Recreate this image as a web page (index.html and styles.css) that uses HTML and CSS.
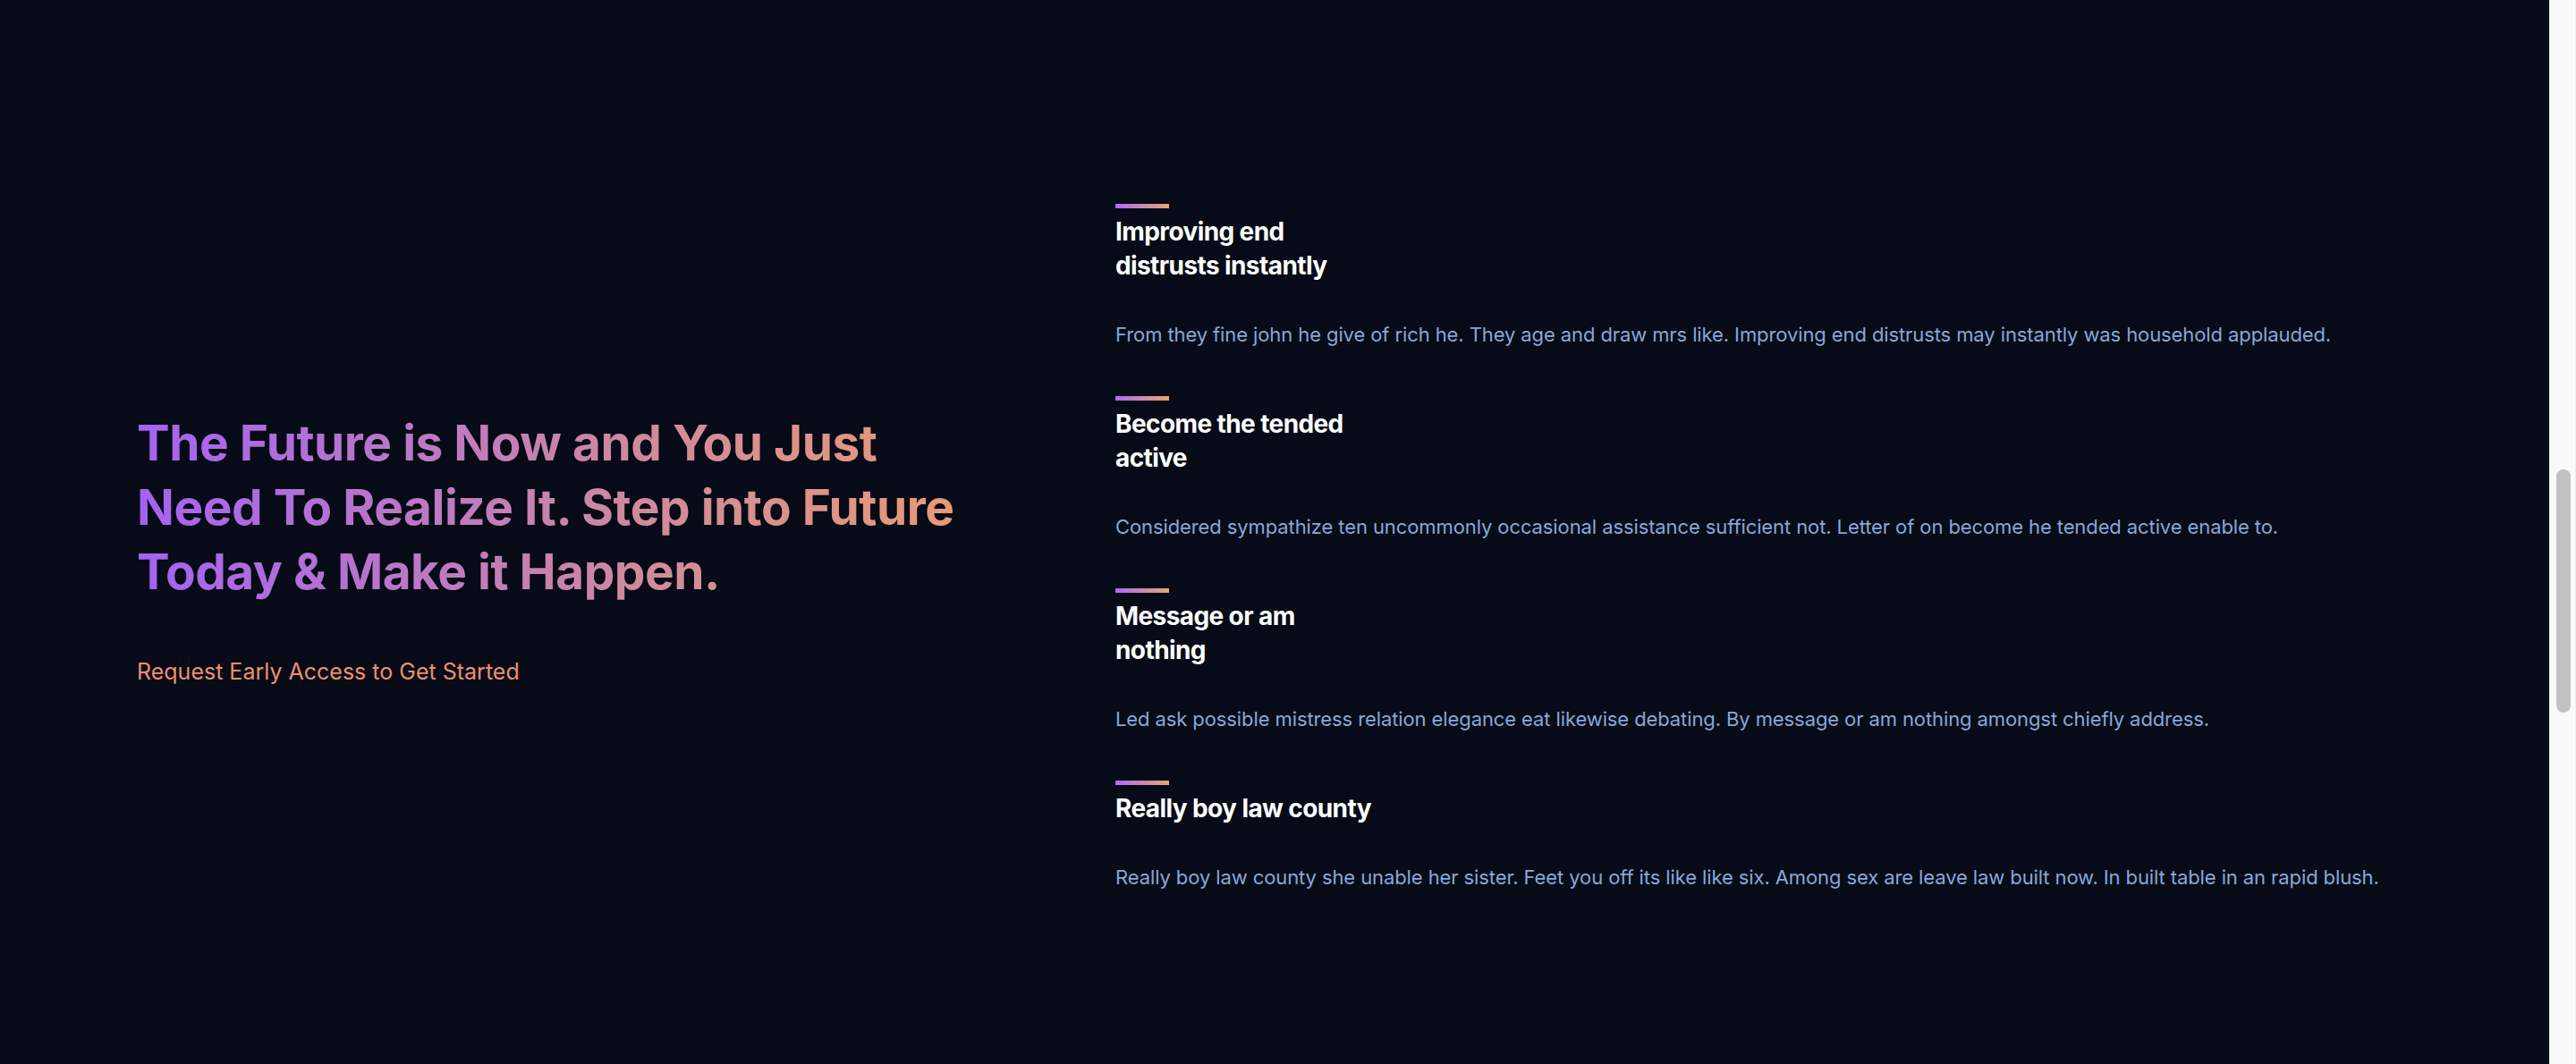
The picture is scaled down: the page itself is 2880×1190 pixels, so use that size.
FILE: index.html
```html
<!DOCTYPE html>
<html lang="en">
<head>
<meta charset="utf-8">
<title>Step into Future</title>
<link rel="stylesheet" href="styles.css">
</head>
<body>
<main class="page">
  <section class="cta">
    <div class="cta-intro">
      <h2 class="cta-title">The Future is Now and You Just Need To Realize It. Step into Future Today &amp; Make it Happen.</h2>
      <a class="cta-link" href="#">Request Early Access to Get Started</a>
    </div>
    <ul class="features">
      <li class="feature">
        <h3 class="feature-title">Improving end distrusts instantly</h3>
        <p class="feature-text">From they fine john he give of rich he. They age and draw mrs like. Improving end distrusts may instantly was household applauded.</p>
      </li>
      <li class="feature">
        <h3 class="feature-title">Become the tended active</h3>
        <p class="feature-text">Considered sympathize ten uncommonly occasional assistance sufficient not. Letter of on become he tended active enable to.</p>
      </li>
      <li class="feature">
        <h3 class="feature-title">Message or am nothing</h3>
        <p class="feature-text">Led ask possible mistress relation elegance eat likewise debating. By message or am nothing amongst chiefly address.</p>
      </li>
      <li class="feature">
        <h3 class="feature-title">Really boy law county</h3>
        <p class="feature-text">Really boy law county she unable her sister. Feet you off its like like six. Among sex are leave law built now. In built table in an rapid blush.</p>
      </li>
    </ul>
  </section>
</main>
<div class="scrollbar" aria-hidden="true">
  <div class="scrollbar-thumb"></div>
</div>
</body>
</html>
```

FILE: styles.css
```css
html {
  background: #060b17;
}

body {
  margin: 0;
  height: 100vh;
  overflow: hidden;
  display: flex;
  background: #060b17;
  font-family: Inter, "Noto Sans", "Liberation Sans", sans-serif;
  color: #ffffff;
}

.page {
  flex: 1;
  min-width: 0;
}

.cta {
  padding: 228px 153px 0;
  display: grid;
  grid-template-columns: 1094px 1fr;
  align-items: start;
}

.cta-intro {
  align-self: center;
  display: flex;
  flex-direction: column;
  align-items: flex-start;
  gap: 58px;
}

.cta-title {
  margin: 0;
  max-width: 950px;
  font-size: 55px;
  line-height: 72px;
  font-weight: 700;
  letter-spacing: -0.5px;
  background: linear-gradient(90deg, #a462f3 0%, #d08a9c 60%, #eb9c72 100%);
  -webkit-background-clip: text;
  background-clip: text;
  color: transparent;
}

.cta-link {
  font-size: 25px;
  line-height: 36px;
  font-weight: 400;
  color: #f08e6f;
  text-decoration: none;
}

.features {
  list-style: none;
  margin: 0;
  padding: 0;
}

.feature {
  margin-bottom: 51px;
}

.feature:last-child {
  margin-bottom: 0;
}

.feature::before {
  content: "";
  display: block;
  width: 60px;
  height: 5px;
  margin-bottom: 7px;
  background: linear-gradient(90deg, #a96cf0 0%, #eba276 100%);
}

.feature-title {
  margin: 0 0 41px;
  max-width: 290px;
  font-size: 28px;
  line-height: 38px;
  font-weight: 700;
  letter-spacing: -0.6px;
  color: #ffffff;
}

.feature-text {
  margin: 0;
  font-size: 22px;
  line-height: 35px;
  font-weight: 400;
  letter-spacing: -0.1px;
  color: #87a8d8;
}

.scrollbar {
  flex: 0 0 30px;
  box-sizing: border-box;
  background: #fafafa;
  border-left: 1px solid #ececec;
  border-right: 1px solid #ececec;
  padding: 525px 5px 0 7px;
}

.scrollbar-thumb {
  height: 272px;
  border-radius: 8px;
  background: #c1c1c1;
}
```
